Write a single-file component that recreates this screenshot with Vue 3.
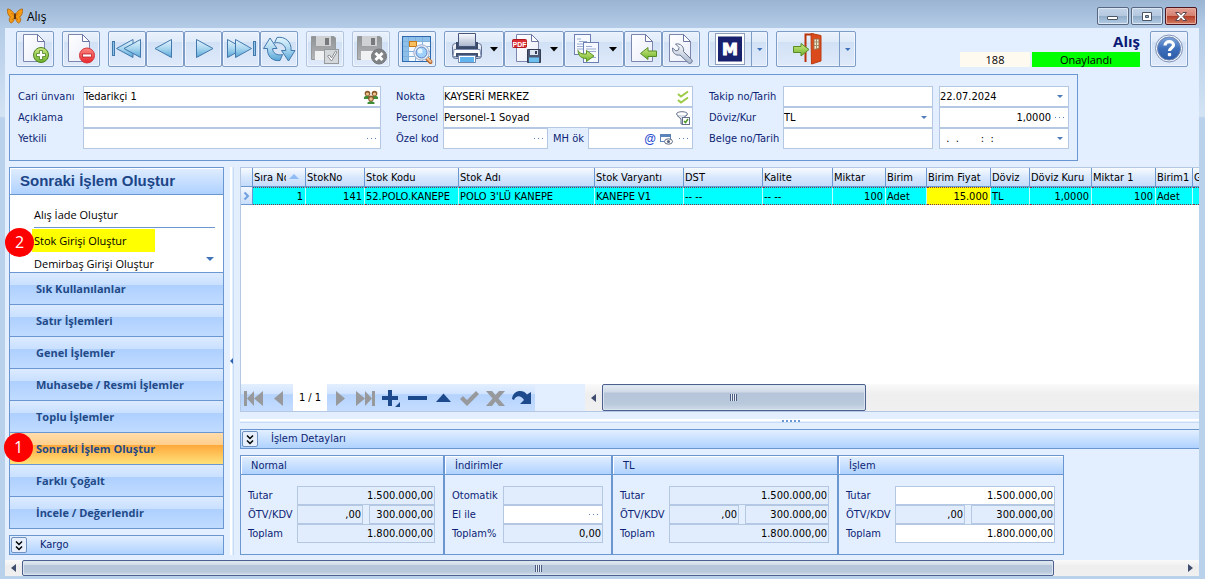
<script setup>
import { ref } from 'vue'

const menu = [
  { text: 'Sık Kullanılanlar' },
  { text: 'Satır İşlemleri' },
  { text: 'Genel İşlemler' },
  { text: 'Muhasebe / Resmi İşlemler' },
  { text: 'Toplu İşlemler' },
  { text: 'Sonraki İşlem Oluştur', active: true, step: '1' },
  { text: 'Farklı Çoğalt' },
  { text: 'İncele / Değerlendir' },
]

const columns = [
  { title: 'Sıra No', value: '1', width: 53, num: true, sorted: true },
  { title: 'StokNo', value: '141', width: 59, num: true },
  { title: 'Stok Kodu', value: '52.POLO.KANEPE', width: 94 },
  { title: 'Stok Adı', value: "POLO 3'LÜ KANEPE", width: 136 },
  { title: 'Stok Varyantı', value: 'KANEPE V1', width: 89 },
  { title: 'DST', value: '-- --', width: 79 },
  { title: 'Kalite', value: '-- --', width: 70 },
  { title: 'Miktar', value: '100', width: 53, num: true },
  { title: 'Birim', value: 'Adet', width: 41 },
  { title: 'Birim Fiyat', value: '15.000', width: 64, num: true, mark: true },
  { title: 'Döviz', value: 'TL', width: 39 },
  { title: 'Döviz Kuru', value: '1,0000', width: 62, num: true },
  { title: 'Miktar 1', value: '100', width: 64, num: true },
  { title: 'Birim1', value: 'Adet', width: 37 },
  { title: 'G', value: '', width: 0 },
]

const totals = ref([
  { title: 'Normal', cls: 'w-normal', rows: [['Tutar', '1.500.000,00'], ['ÖTV/KDV', ',00', '300.000,00'], ['Toplam', '1.800.000,00']] },
  { title: 'İndirimler', cls: 'w-disc', rows: [['Otomatik', ''], ['El ile', ''], ['Toplam%', '0,00']], open: [1], dots: 1 },
  { title: 'TL', cls: 'w-tl', rows: [['Tutar', '1.500.000,00'], ['ÖTV/KDV', ',00', '300.000,00'], ['Toplam', '1.800.000,00']] },
  { title: 'İşlem', cls: 'w-tl', rows: [['Tutar', '1.500.000,00'], ['ÖTV/KDV', ',00', '300.000,00'], ['Toplam', '1.800.000,00']], open: [0, 2] },
])
</script>

<template>
  <div class="window">
    <header class="titlebar">
      <svg class="app-icon" width="16" height="16" viewBox="0 0 16 16">
        <path d="M8 7 C6 3 2 .5 .5 1 C0 4 1 8 3.5 9 C1.500 10 2 14 4 15 C6 15 7 12 8 9Z" fill="#f39a14" stroke="#a85c08" stroke-width=".7" />
        <path d="M8 7 C10 3 14 .5 15.500 1 C16 4 15 8 12.500 9 C14.500 10 14 14 12 15 C10 15 9 12 8 9Z" fill="#f39a14" stroke="#a85c08" stroke-width=".7" />
        <path d="M4.500 5L8 8.500L11.500 5M5 12L8 8.500L11 12" fill="none" stroke="#b9660a" stroke-width=".8" />
        <path d="M8 5.500V11" stroke="#4a2a10" stroke-width="1.600" />
      </svg>
      <h1>Alış</h1>
      <div class="win-buttons">
        <button aria-label="Küçült"><svg width="30" height="16"><rect x="9.500" y="8.500" width="10" height="3" rx=".5" fill="#fff" stroke="#4a5666" /></svg></button>
        <button aria-label="Ekranı kapla"><svg width="30" height="16"><path d="M10.500 4.500h9v8h-9zM13.500 7.500h3v2h-3z" fill="#fff" fill-rule="evenodd" stroke="#4a5666" /></svg></button>
        <button class="close" aria-label="Kapat"><svg width="30" height="16"><path d="M9.500 4.500h3.500l2 2.300 2-2.300h3.500l-3.500 4 3.500 4h-3.500l-2-2.300-2 2.300h-3.500l3.500-4z" fill="#fff" stroke="#5a4850" /></svg></button>
      </div>
    </header>

    <main class="client">
      <svg width="0" height="0" class="defs">
        <defs>
          <linearGradient id="gBlue" x1="0" y1="0" x2="0" y2="1"><stop offset="0" stop-color="#e4f5fd" /><stop offset=".5" stop-color="#a9d6ef" /><stop offset="1" stop-color="#57a5d6" /></linearGradient>
          <linearGradient id="gGreen" x1="0" y1="0" x2="0" y2="1"><stop offset="0" stop-color="#d0eb84" /><stop offset="1" stop-color="#6bb02a" /></linearGradient>
          <linearGradient id="gRed" x1="0" y1="0" x2="0" y2="1"><stop offset="0" stop-color="#ff8a84" /><stop offset="1" stop-color="#e8242c" /></linearGradient>
          <linearGradient id="gPage" x1="0" y1="0" x2="1" y2="1"><stop offset="0" stop-color="#fff" /><stop offset="1" stop-color="#e9edfa" /></linearGradient>
          <linearGradient id="gGrey" x1="0" y1="0" x2="0" y2="1"><stop offset="0" stop-color="#fafcff" /><stop offset="1" stop-color="#a9b6cc" /></linearGradient>
          <linearGradient id="gDisk" x1="0" y1="0" x2="0" y2="1"><stop offset="0" stop-color="#8f9295" /><stop offset="1" stop-color="#b4b6b9" /></linearGradient>
          <linearGradient id="gHelp" x1="0" y1="0" x2="0" y2="1"><stop offset="0" stop-color="#7ea6dc" /><stop offset=".5" stop-color="#3d6fba" /><stop offset="1" stop-color="#2a5ba8" /></linearGradient>
          <path id="page" d="M7.500 3.500H21.500L28.500 10.500V30.500H7.500Z" fill="url(#gPage)" stroke="#7d87ae" />
          <path id="fold" d="M21.500 3.500V10.500H28.500Z" fill="#fff" stroke="#6b76a4" />
          <g id="floppy">
            <path d="M5.500 5.500H28L29.500 7V28.500H5.500Z" fill="url(#gDisk)" stroke="#96999c" />
            <rect x="10" y="5" width="15" height="10" fill="#cfd1d3" /><rect x="19" y="7" width="4" height="7" fill="#77797c" />
            <rect x="9" y="20" width="17" height="9" fill="#f0f1f2" />
          </g>
          <path id="drop" d="M46 16h8l-4 4.500z" fill="#000" />
          <path id="bigleft" d="M17 8.500V26.500L.5 17.500Z" fill="url(#gBlue)" stroke="#4378ad" />
        </defs>
      </svg>

      <div class="toolbar">
        <button class="tb" aria-label="Yeni"><svg width="38" height="36"><use href="#page" /><use href="#fold" /><circle cx="25" cy="24" r="7.500" fill="url(#gGreen)" stroke="#4b8222" /><path d="M23.500 19.500h3v3h3v3h-3v3h-3v-3h-3v-3h3z" fill="#fff" stroke="#4b8222" stroke-width=".8" /></svg></button>
        <button class="tb" aria-label="Sil"><svg width="38" height="36"><use href="#page" x="-1" /><use href="#fold" x="-1" /><circle cx="25" cy="24.500" r="7.500" fill="url(#gRed)" stroke="#d2353a" /><rect x="20.500" y="23" width="9" height="3" fill="#fff" stroke="#b82228" stroke-width=".8" /></svg></button>
        <div class="tb-group">
          <button class="tb" aria-label="İlk"><svg width="38" height="36"><rect x="4.500" y="10.500" width="2" height="14" fill="#8cc4e6" stroke="#4378ad" /><use href="#bigleft" x="8" /><use href="#bigleft" x="15.500" /></svg></button>
          <button class="tb" aria-label="Önceki"><svg width="38" height="36"><use href="#bigleft" x="8.500" /></svg></button>
          <button class="tb" aria-label="Sonraki"><svg width="38" height="36"><path d="M12.500 8.500V26.500L29 17.500Z" fill="url(#gBlue)" stroke="#4378ad" /></svg></button>
          <button class="tb" aria-label="Son"><svg width="38" height="36"><path d="M5.500 8.500V26.500L21.500 17.500Z" fill="url(#gBlue)" stroke="#4378ad" /><path d="M13.500 8.500V26.500L29.500 17.500Z" fill="url(#gBlue)" stroke="#4378ad" /><rect x="31.500" y="10.500" width="2" height="14" fill="#8cc4e6" stroke="#4378ad" /></svg></button>
          <button class="tb" aria-label="Yenile"><svg width="38" height="36">
            <path d="M10 7L3.500 17.500H7.500C7 25 12 30.500 20 29.500L22.500 23.500C17 25 12.500 22 12.700 17.500H17Z" fill="url(#gBlue)" stroke="#4378ad" stroke-linejoin="round" />
            <path d="M28.500 30L35 19.500H31C32 11 25 5 17 6.500L14.500 12C20 10.500 26 14 25.800 19.500H21.500Z" fill="url(#gBlue)" stroke="#4378ad" stroke-linejoin="round" />
          </svg></button>
        </div>
        <button class="tb off" disabled aria-label="Kaydet"><svg width="38" height="36"><use href="#floppy" /><rect x="18.500" y="18.500" width="14" height="14" fill="#d5d8db" stroke="#96999c" /><path d="M21.500 25l2 -1 2 3 4-7 1.500 1-5.500 9z" fill="#fff" stroke="#8b8e92" /></svg></button>
        <button class="tb off" disabled aria-label="Vazgeç"><svg width="38" height="36"><use href="#floppy" /><circle cx="27" cy="25.500" r="7.500" fill="#808386" stroke="#74777a" /><path d="M23.500 22l7 7M30.500 22l-7 7" stroke="#fff" stroke-width="3" /></svg></button>
        <button class="tb" aria-label="Tablo ara"><svg width="38" height="36">
          <rect x="4.500" y="5.500" width="28" height="25" fill="#f2f8ff" stroke="#2f69ad" />
          <path d="M5 6h27v4H5zM5 10h5v20H5z" fill="#8cc0ea" />
          <path d="M10.500 6V30M17.500 6V30M24.500 6V30M5 10.500H32M5 15.500H32M5 20.500H32M5 25.500H32" stroke="#7fb0dc" />
          <rect x="11.500" y="10.500" width="7" height="5" fill="#f8bf60" stroke="#c77a17" />
          <path d="M28 26.500l4.500 4.500" stroke="#b66a2c" stroke-width="4" stroke-linecap="round" /><path d="M29 27l3.500 3.500" stroke="#f5c08e" stroke-width="2" stroke-linecap="round" />
          <circle cx="23.500" cy="21.500" r="6.500" fill="#b9dcfb" stroke="#eef4fb" stroke-width="3" /><circle cx="23.500" cy="21.500" r="5.500" fill="#9fd0f9" stroke="#5d7fc0" /><circle cx="23.500" cy="21.500" r="7.700" fill="none" stroke="#8595b8" stroke-width=".8" /><circle cx="22" cy="20" r="2.500" fill="#e6f4ff" />
        </svg></button>
        <div class="tb-group">
          <button class="tb wide" aria-label="Yazdır"><svg width="60" height="36">
            <rect x="8.500" y="12.500" width="29" height="15" rx="3" fill="url(#gGrey)" stroke="#5f6f93" />
            <path d="M12 11h22v8H12z" fill="#3b4a68" /><path d="M14.500 2.500h17v13h-17z" fill="url(#gGrey)" stroke="#46557a" />
            <path d="M10 18.500h26l1 7H9z" fill="#fff" stroke="#8090b2" /><path d="M12 22h22v4H12z" fill="#41506e" />
            <path d="M14.500 24.500h17v7h-17z" fill="#fff" stroke="#7088b0" /><path d="M16 26h14v5H16z" fill="#62b4ee" /><use href="#drop" /></svg></button>
          <button class="tb wide" aria-label="PDF kaydet"><svg width="60" height="36">
            <path d="M12.500 3.500H27.500L34.500 10.500V30.500H12.500Z" fill="url(#gPage)" stroke="#7d87ae" /><path d="M27.500 3.500V10.500H34.500Z" fill="#fff" stroke="#6b76a4" />
            <rect x="8.500" y="8.500" width="14" height="8" rx="1" fill="#d92f35" stroke="#b0181f" /><text x="15.500" y="15.500" class="pdf" text-anchor="middle">PDF</text>
            <path d="M23.500 18.500h13v13h-13z" fill="#4d5874" stroke="#343d56" /><path d="M26 19h8v5h-8z" fill="#dce4f0" /><path d="M31 20h2v3h-2z" fill="#343d56" /><path d="M25 26.500h10v5H25z" fill="#6cc0f0" /><use href="#drop" /></svg></button>
          <button class="tb wide" aria-label="Kopyala"><svg width="60" height="36">
            <rect x="10.500" y="3.500" width="16" height="20" fill="#f6f9ff" stroke="#6d80b4" /><path d="M13 8h4M15 10.500h8M13 13h10M13 15.500h10M13 18h8" stroke="#9aabd0" />
            <rect x="19.500" y="11.500" width="15" height="20" fill="#f6f9ff" stroke="#6d80b4" /><path d="M22 15.500h6M22 18h10M22 20.500h10M25 26.500h7" stroke="#9aabd0" />
            <path d="M14 19.500C15 22 18 23.500 22.500 23V19.500L30 25L22.500 30.500V27.500C17 27.500 14.500 25 14 19.500Z" fill="url(#gGreen)" stroke="#5d9424" /><use href="#drop" x="-1" /></svg></button>
          <button class="tb" aria-label="İçe aktar"><svg width="38" height="36"><use href="#page" /><use href="#fold" /><path d="M16.500 22.500L24 16.500V20H32.500V25.500H24V28.500Z" fill="url(#gGreen)" stroke="#568c25" /></svg></button>
          <button class="tb" aria-label="Ayarlar"><svg width="38" height="36"><use href="#page" /><use href="#fold" />
            <path d="M13.500 13L17 16.500L16.500 19L14 20L10.500 17C10 21.500 13.500 25 18 24L26.500 32C29 33.500 31.500 30.500 29.500 28.500L21.500 20.500C22.500 16 18.500 12 13.500 13Z" fill="url(#gGrey)" stroke="#66748f" stroke-linejoin="round" /></svg></button>
        </div>
        <button class="tb wide" aria-label="M"><svg width="60" height="36">
          <rect x="7.500" y="2.500" width="29" height="31" fill="#fff" stroke="#8e9dbb" /><rect x="10" y="5.500" width="24" height="25" fill="#17216d" />
          <text x="22" y="23.500" class="m" text-anchor="middle">M</text>
          <path d="M43.500 1V35" stroke="#7d9cc6" /><path d="M49 17h5.500l-2.750 3z" fill="#3d71b5" /></svg></button>
        <button class="tb exit" aria-label="Çıkış"><svg width="80" height="36">
          <path d="M29.500 31V3.500H38" fill="none" stroke="#b9320a" stroke-width="2" /><path d="M35 2.500L45 4.500V30L35.500 33Z" fill="#da4a1a" stroke="#bb3c12" />
          <path d="M38 8h5v9.500l-5 1z" fill="#f2ead5" stroke="#a56b48" /><path d="M40.500 8v10M38 11h5M38 14.500h5" stroke="#9d8d69" />
          <path d="M17.500 15.500H25V12.500L33 18.500L25 25V21.500H17.500Z" fill="url(#gGreen)" stroke="#568c25" />
          <path d="M63.500 1V35" stroke="#7d9cc6" /><path d="M69 17h5.500l-2.750 3z" fill="#3d71b5" /></svg></button>

        <div class="status">
          <h2>Alış</h2>
          <div class="status-row"><output class="no">188</output><output class="ok">Onaylandı</output></div>
        </div>
        <button class="tb help" aria-label="Yardım"><svg width="38" height="36"><circle cx="19" cy="17.500" r="13.500" fill="#f3f6fb" stroke="#7f93b8" /><circle cx="19" cy="17.500" r="11.500" fill="url(#gHelp)" stroke="#6d86b4" /><path d="M15 14.500C15 9.500 23.500 9.500 23.500 14C23.500 17 19.500 17 19.500 20" fill="none" stroke="#fff" stroke-width="3.200" /><rect x="17.800" y="22" width="3.400" height="3.200" rx="1" fill="#fff" /></svg></button>
      </div>

      <form class="form-panel" @submit.prevent>
        <div class="pairs c1">
          <label for="cari">Cari ünvanı</label>
          <div class="field"><input id="cari" value="Tedarikçi 1" /><button aria-label="Cari seç"><svg width="14" height="14" viewBox="0 0 14 14">
            <path d="M0 7q3-3 6 0v2H0zM8 7q3-3 6 0v2H8zM3.500 12.500q3.500-3 7 0V14h-7z" fill="#3f8d36" /><circle cx="3.500" cy="3.500" r="2.800" fill="#8a5a2c" /><circle cx="10.500" cy="3.500" r="2.800" fill="#8a5a2c" /><circle cx="7" cy="8.500" r="2.900" fill="#8a5a2c" /><circle cx="3.500" cy="4" r="1.600" fill="#f1c592" /><circle cx="10.500" cy="4" r="1.600" fill="#f1c592" /><circle cx="7" cy="9" r="1.700" fill="#f1c592" /></svg></button></div>
          <label for="acik">Açıklama</label>
          <div class="field"><input id="acik" /></div>
          <label for="yetkili">Yetkili</label>
          <div class="field"><input id="yetkili" /><button class="dots" aria-label="Yetkili seç"><i></i></button></div>
        </div>
        <div class="pairs c2">
          <label for="nokta">Nokta</label>
          <div class="field"><input id="nokta" value="KAYSERİ MERKEZ" /><button aria-label="Nokta seç"><svg width="14" height="14" viewBox="0 0 14 14"><path d="M2 4l3 2.500L12 1.500M2 10l3 2.500L12 7.500" fill="none" stroke="#9bcb45" stroke-width="2" /></svg></button></div>
          <label for="personel">Personel</label>
          <div class="field"><input id="personel" value="Personel-1 Soyad" /><button aria-label="Personel seç"><svg width="14" height="14" viewBox="0 0 14 14"><ellipse cx="6" cy="3" rx="5.500" ry="2.300" fill="#fff" stroke="#65728c" /><path d="M1 4.500L5 8V13H7V7L11 4" fill="#d8deea" stroke="#65728c" /><rect x="6.500" y="6.500" width="7" height="7" fill="#fff" stroke="#65728c" /><path d="M8 10l1.500 1.500L12 8" fill="none" stroke="#4f9a22" stroke-width="1.500" /></svg></button></div>
          <label for="ozel">Özel kod</label>
          <div class="split">
            <div class="field"><input id="ozel" /><button class="dots" aria-label="Özel kod seç"><i></i></button></div>
            <label for="mh">MH ök</label>
            <div class="field mh"><input id="mh" /><button class="at" aria-label="E-posta">@</button><button aria-label="Görüntüle"><svg width="13" height="12" viewBox="0 0 13 12"><rect x=".5" y="1.500" width="10" height="7" fill="#fff" stroke="#5a84ba" /><path d="M0 1h11v3H0z" fill="#5a84ba" /><ellipse cx="8.500" cy="8.500" rx="4" ry="2.700" fill="#fff" stroke="#5c6880" /><circle cx="8.500" cy="8.500" r="1.600" fill="#5c6880" /></svg></button><button class="dots" aria-label="MH ök seç"><i></i></button></div>
          </div>
        </div>
        <div class="pairs c3">
          <label for="takip">Takip no/Tarih</label>
          <div class="field"><input id="takip" /></div>
          <div class="field"><input aria-label="Tarih" value="22.07.2024" /><button class="caret" aria-label="Tarih aç"></button></div>
          <label for="doviz">Döviz/Kur</label>
          <div class="field sel"><select id="doviz"><option>TL</option></select><span class="caret"></span></div>
          <div class="field"><input class="num" aria-label="Kur" value="1,0000" /><button class="dots" aria-label="Kur seç"><i></i></button></div>
          <label for="belge">Belge no/Tarih</label>
          <div class="field"><input id="belge" /></div>
          <div class="field"><input aria-label="Belge tarihi" value="  .  .       :  :" /><button class="caret" aria-label="Belge tarihi aç"></button></div>
        </div>
      </form>

      <div class="work">
        <aside class="side">
          <nav class="accordion">
            <h2 class="acc-title">Sonraki İşlem Oluştur</h2>
            <div class="acc-body">
              <a href="#" class="first">Alış İade Oluştur</a>
              <a href="#" class="marked"><span class="step">2</span>Stok Girişi Oluştur</a>
              <a href="#" class="last">Demirbaş Girişi Oluştur</a>
              <span class="more"></span>
            </div>
            <button v-for="m in menu" :key="m.text" class="acc-btn" :class="{ active: m.active }">
              <span v-if="m.step" class="step">{{ m.step }}</span>{{ m.text }}
            </button>
          </nav>
          <div class="bar">
            <button class="expand" aria-label="Kargo aç"><svg width="14" height="15"><path d="M4 3.500l3 3 3-3M4 8.500l3 3 3-3" fill="none" stroke="#000" stroke-width="1.500" /></svg></button>
            <span>Kargo</span>
          </div>
        </aside>

        <div class="vsplit"><i></i></div>

        <section class="main">
          <div class="grid">
            <div class="rows">
              <table>
                <colgroup><col class="ind" /><col v-for="c in columns" :key="c.title" :style="c.width ? { width: c.width + 'px' } : {}" /></colgroup>
                <thead><tr><th></th><th v-for="c in columns" :key="c.title" :class="{ sorted: c.sorted }"><div>{{ c.title }}</div></th></tr></thead>
                <tbody><tr>
                  <td class="ind"><svg width="8" height="10"><path d="M1.500 1.500L5 5L1.500 8.500" fill="none" stroke="#6fa0e0" stroke-width="2" /></svg></td>
                  <td v-for="c in columns" :key="c.title" :class="{ num: c.num, mark: c.mark }">{{ c.value }}</td>
                </tr></tbody>
              </table>
            </div>
            <div class="grid-foot">
              <div class="navigator">
                <button disabled aria-label="İlk kayıt"><svg width="26" height="26"><path d="M3 6h3v15H3zM13 6v15l-7-7.500zM22 6v15l-9-7.500z" fill="#98999c" /></svg></button>
                <button disabled aria-label="Önceki kayıt"><svg width="26" height="26"><path d="M16 6v15l-9-7.500z" fill="#98999c" /></svg></button>
                <output>1 / 1</output>
                <button disabled aria-label="Sonraki kayıt"><svg width="26" height="26"><path d="M9 6v15l9-7.500z" fill="#98999c" /></svg></button>
                <button disabled aria-label="Son kayıt"><svg width="26" height="26"><path d="M3 6v15l9-7.500zM12 6v15l7-7.500zM19 6h3v15h-3z" fill="#98999c" /></svg></button>
                <button aria-label="Ekle"><svg width="26" height="26"><path d="M9 5h4v6h6v4h-6v6H9v-6H3v-4h6zM21 17v5h-5z" fill="#1d4a8d" /></svg></button>
                <button aria-label="Çıkar"><svg width="26" height="26"><path d="M3 11h19v4H3z" fill="#1d4a8d" /></svg></button>
                <button aria-label="Düzenle"><svg width="26" height="26"><path d="M5 17h15l-7.500-8.500z" fill="#1d4a8d" /></svg></button>
                <button disabled aria-label="Onayla"><svg width="26" height="26"><path d="M3 14l3-3 4 4 9-9 3 3-12 12z" fill="#98999c" /></svg></button>
                <button disabled aria-label="İptal"><svg width="26" height="26"><path d="M3 6h6l3.500 4L16 6h6l-6.500 7.500L22 21h-6l-3.500-4.500L9 21H3l6.500-7.500z" fill="#98999c" /></svg></button>
                <button aria-label="Tazele"><svg width="26" height="26"><path d="M3 14C4 5 14 4 18 9.500L22 7v12H11l4-4C12 10 7 10 5 15z" fill="#1d4a8d" /></svg></button>
              </div>
              <div class="hscroll gscroll"><button class="arrow" aria-label="Sola"></button><div class="track"><div class="thumb"><i></i></div></div></div>
            </div>
          </div>

          <div class="hsplit"><i></i></div>

          <div class="bar wide-bar">
            <button class="expand" aria-label="Detay aç"><svg width="14" height="15"><path d="M4 3.500l3 3 3-3M4 8.500l3 3 3-3" fill="none" stroke="#000" stroke-width="1.500" /></svg></button>
            <span>İşlem Detayları</span>
          </div>

          <div class="totals">
            <fieldset v-for="(t, ti) in totals" :key="t.title" :class="t.cls">
              <h3>{{ t.title }}</h3>
              <div class="t-body">
                <div v-for="(r, ri) in t.rows" :key="r[0]" class="t-row">
                  <label :for="'t' + ti + ri">{{ r[0] }}</label>
                  <div class="t-fields">
                    <div v-for="n in r.length - 1" :key="n" class="field" :class="{ ro: !(t.open || []).includes(ri), small: r.length > 2 && n === 1 }">
                      <input :id="n === 1 ? 't' + ti + ri : undefined" class="num" :aria-label="t.title + ' ' + r[0]" :value="r[n]" />
                      <button v-if="t.dots === ri" class="dots" aria-label="Seç"><i></i></button>
                    </div>
                  </div>
                </div>
              </div>
            </fieldset>
          </div>
        </section>
      </div>

      <div class="hscroll wscroll"><button class="arrow" aria-label="Sola kaydır"></button><div class="track"><div class="thumb"><i></i></div></div><button class="arrow right" aria-label="Sağa kaydır"></button></div>
    </main>
  </div>
</template>

<style>
body { margin: 0; }
</style>

<style scoped>
* { box-sizing: border-box; }
button, input, select { font: inherit; color: inherit; margin: 0; padding: 0; border: 0; background: none; border-radius: 0; }
.window {
  min-height: 100vh; display: flex; flex-direction: column; padding: 0 6px 3px 5px; overflow: hidden;
  font: 11px/14px "DejaVu Sans Condensed", "Noto Sans", sans-serif; color: #000;
  background: linear-gradient(#9ab4d2, #b4cce7 28px, #d3e3f4 116px, #b9d1ea 118px, #b9d1ea);
}
.titlebar { height: 28px; display: flex; align-items: flex-start; padding-left: 2px; }
.app-icon { margin-top: 8px; }
h1 { margin: 8px 0 0 4px; font: 12px/18px "Open Sans", "Noto Sans", sans-serif; }
.win-buttons { display: flex; gap: 2px; margin: 7px 2px 0 auto; }
.win-buttons button { width: 32px; height: 18px; border: 1px solid #56677f; border-radius: 2px; background: linear-gradient(#c3d4e8, #b4c8df 48%, #93aeca 52%, #b3cbe4); box-shadow: inset 0 0 0 1px #dbe7f4; }
.win-buttons .close { border-color: #4d1620; background: linear-gradient(#e3a195, #d5806f 48%, #b53d28 52%, #d37c60); box-shadow: inset 0 0 0 1px #e6ada1; }
.win-buttons svg { display: block; }

.client { flex: 1; display: flex; flex-direction: column; background: #e3efff; }
.defs { position: absolute; }
.toolbar { display: flex; gap: 8px; padding: 3px 11px 7px 11px; }
.tb-group { display: flex; }
.tb { width: 38px; height: 36px; flex: none; border: 1px solid #7d9cc6; border-radius: 2px; background: linear-gradient(#e9f1fc, #e0ebf9 28%, #d1e1f5 30%, #dfeafa); box-shadow: inset 0 0 0 1px #eef5fe; }
.tb.wide { width: 60px; }
.tb.exit { width: 80px; }
.tb.off { border-color: #b3c5dd; }
.tb svg { display: block; margin: -1px; }
.pdf { font: bold 7px "Liberation Sans", sans-serif; fill: #fff; }
.m { font: bold 16px "DejaVu Sans", sans-serif; fill: #fff; stroke: #fff; stroke-width: 1px; }
.status { margin-left: auto; margin-right: 2px; text-align: right; }
.status h2 { margin: 0; color: #0a1a75; font: bold 15px/21px "Open Sans", sans-serif; }
.status-row { display: flex; gap: 2px; font: 11px/15px "Open Sans", sans-serif; text-align: center; }
.no { width: 70px; background: #fffaf0; }
.ok { width: 108px; background: #0f0; }

.form-panel { display: flex; margin: 0 121px 6px 4px; padding: 11px 8px 11px 8px; border: 1px solid #6a96d2; color: #0d2474; }
.pairs { display: grid; grid-auto-rows: 21px; align-items: center; min-width: 0; }
.c1 { grid-template-columns: 65px 1fr; flex: 363 1 0; }
.c2 { grid-template-columns: 47px 1fr; flex: 297 1 0; margin-left: 15px; }
.c3 { grid-template-columns: 74px 1fr 136px; flex: 360 1 0; margin-left: 16px; }
.c3 > .field:nth-child(3n) { margin-left: 6px; }
label { white-space: nowrap; }
.field { height: 21px; min-width: 0; display: flex; align-items: center; border: 1px solid #b4c8e4; background: #fff; color: #000; }
.field input { flex: 1; width: 100%; min-width: 0; height: 100%; outline: 0; white-space: pre; }
.field button { flex: none; display: flex; padding: 0 2px; }
.num { text-align: right; }
.field .dots { width: 17px; justify-content: center; }
.dots i { width: 9px; height: 1px; background: repeating-linear-gradient(90deg, #5b83bb 0 1px, transparent 1px 4px); }
.caret { width: 17px; height: 18px; justify-content: center; align-items: center; }
.caret::after { content: ""; border: 3px solid transparent; border-top: 3px solid #4d7cb8; border-bottom: 0; }
.sel { position: relative; }
.sel select { appearance: none; flex: 1; height: 100%; outline: 0; }
.sel .caret { position: absolute; right: 0; display: flex; pointer-events: none; }
.split { display: flex; align-items: center; }
.split .field { flex: 1; }
.split label { width: 40px; padding-left: 5px; flex: none; }
.field .at { color: #2b4fd0; font: bold 12px/14px "Liberation Sans", sans-serif; }

.work { flex: 1; display: flex; margin-left: 4px; }
.side { width: 215px; flex: none; display: flex; flex-direction: column; gap: 6px; }
.accordion { flex: 1; display: flex; flex-direction: column; border: 1px solid #6a96d2; background: #fff; }
.acc-title { margin: 0; height: 27px; padding-left: 10px; border-bottom: 1px solid #6a96d2; color: #1c4587; background: linear-gradient(#e0edff, #afd1ff); box-shadow: inset 1px 1px #fff; font: bold 15px/26px "Liberation Sans", Arial, sans-serif; }
.acc-body { flex: 1; position: relative; display: flex; flex-direction: column; min-height: 77px; padding-top: 6px; font: 12px/22px "Open Sans", "Noto Sans", sans-serif; }
.acc-body a { position: relative; color: #000; text-decoration: none; font-size: 11px; }
.acc-body .first { height: 27px; line-height: 28px; margin: 0 8px 1px 24px; border-bottom: 1px solid #6a96d2; }
.acc-body .marked { width: 123px; height: 23px; line-height: 24px; margin-left: 22px; padding-left: 2px; background: #ff0; }
.acc-body .last { height: 20px; line-height: 24px; margin-left: 24px; }
.more { position: absolute; right: 9px; bottom: 11px; border: 4px solid transparent; border-top-color: #3f74b8; border-bottom: 0; }
.acc-btn { position: relative; height: 32px; padding-left: 26px; border-top: 1px solid #6a96d2; text-align: left; color: #1f4a87; background: linear-gradient(#dcebff, #c9e0ff 38%, #aed0ff 40%, #c0dbff); font: bold 11px/30px "Open Sans", "Noto Sans", sans-serif; white-space: nowrap; }
.acc-btn.active { background: linear-gradient(#ffdcab, #ffcf8b 38%, #ffa93c 40%, #ffe17a); }
.acc-body .step, .acc-btn .step { position: absolute; left: -27px; top: -1px; z-index: 1; width: 29px; height: 29px; border-radius: 50%; background: #f00; color: #fff; text-align: center; font: 16px/28px "Open Sans", sans-serif; }
.acc-btn .step { left: -6px; top: 0; }
.bar { height: 20px; flex: none; display: flex; align-items: center; gap: 13px; padding-left: 1px; border: 1px solid #6a96d2; background: linear-gradient(#e3efff, #afd2ff); color: #0d2474; }
.expand { width: 16px; height: 16px; border: 1px solid #6e91c0; border-radius: 2px; background: #e6effb; display: flex; align-items: center; justify-content: center; }
.wide-bar { border-right: 0; }

.vsplit { width: 16px; flex: none; display: flex; align-items: center; background: linear-gradient(90deg, transparent 6px, #fff 6px 8px, #e3efff 8px 9px, #c5dbf8 9px 10px, transparent 10px); }
.vsplit i { margin-left: 6px; border: 3px solid transparent; border-right-color: #2d62b0; border-left: 0; }
.main { flex: 1; min-width: 0; display: flex; flex-direction: column; }
.grid { flex: 1; display: flex; flex-direction: column; border: 1px solid #b4c8e4; border-right: 0; background: #fff; }
.rows { flex: 1; overflow: hidden; }
table { width: 100%; table-layout: fixed; border-collapse: separate; border-spacing: 0; line-height: 14px; }
col.ind { width: 12px; }
th { height: 19px; padding: 1px 0 0 1px; text-align: left; font-weight: normal; border-right: 1px solid #6a96d2; border-bottom: 1px solid #6a96d2; background: linear-gradient(#f8fbff, #d9e8fd 50%, #c3dbfb); white-space: nowrap; overflow: hidden; }
th:last-child, td:last-child { border-right: 0; }
th div { overflow: hidden; }
th.sorted { position: relative; }
th.sorted div { width: 32px; }
th.sorted::after { content: ""; position: absolute; right: 6px; top: 6px; border: 5px solid transparent; border-bottom-color: #8fbcf5; border-top: 0; }
td { height: 18px; padding: 2px 2px 0 1px; background: #0ff; border-right: 1px solid #bff; border-top: 1px dotted #803040; border-bottom: 1px dotted #803040; white-space: nowrap; overflow: hidden; }
td.num { text-align: right; }
td.mark { background: #ff0; }
td.ind { padding: 0 0 0 2px; border: 0; border-right: 1px solid #6a96d2; border-bottom: 1px solid #6a96d2; background: linear-gradient(#f4f8ff, #c9defb); }
td.ind svg { display: block; }
.grid-foot { height: 27px; display: flex; background: #e3efff; }
.navigator { display: flex; background: linear-gradient(#e3efff, #d2e4ff 35%, #b5d3fd 40%, #c5dcff); }
.navigator button { width: 26px; height: 27px; }
.navigator svg { display: block; }
.navigator output { width: 34px; line-height: 28px; text-align: center; background: #fff; }

.hscroll { display: flex; background: linear-gradient(#fafafa, #eee 40%, #f0f0f0); }
.track { flex: 1; }
.arrow { width: 17px; flex: none; display: flex; align-items: center; justify-content: center; }
.arrow::after { content: ""; border: 4px solid transparent; border-right: 5px solid #3e4d70; border-left: 0; }
.arrow.right::after { border: 4px solid transparent; border-left: 5px solid #3e4d70; border-right: 0; }
.thumb { height: 100%; display: flex; align-items: center; justify-content: center; border: 1px solid #4d6190; border-radius: 2px; background: linear-gradient(#e4ebf3, #cfdae6 28%, #b6c5d9 32%, #b9c9dc 75%, #cfdbe9); box-shadow: inset 0 0 0 1px #dbe5f0; }
.thumb i { width: 7px; height: 7px; background: repeating-linear-gradient(90deg, #4b5b80 0 1px, #e6edf5 1px 2px); }
.gscroll { flex: 1; margin-left: 50px; }
.gscroll .thumb { width: 44.2%; }
.wscroll { height: 16px; margin-top: 5px; }
.wscroll .thumb { width: 89%; }

.hsplit { height: 17px; flex: none; display: flex; justify-content: center; background: linear-gradient(transparent 7px, #fff 7px 9px, #e3efff 9px 10px, #c5dbf8 10px 11px, transparent 11px); }
.hsplit i { width: 18px; height: 2px; margin: 8px 0 0 143px; background: repeating-linear-gradient(90deg, #6a96d2 0 2px, #fff 2px 4px); }
.totals { display: flex; margin-top: 6px; color: #0d2474; }
fieldset { margin: 0; padding: 0; height: 100px; min-width: 0; border: 1px solid #6a96d2; }
.w-normal { flex: 0 1 204px; }
.w-disc { flex: 0 1 168px; }
.w-tl { flex: 0 1 226px; }
h3 { margin: 0; height: 19px; padding-left: 10px; border-bottom: 1px solid #6a96d2; background: linear-gradient(#e3efff, #afd2ff); box-shadow: inset 1px 1px #fff; font: inherit; line-height: 19px; }
.t-body { padding: 11px 8px 0 7px; }
.t-row { display: flex; align-items: center; height: 19px; }
.t-row label { width: 49px; flex: none; }
.w-disc .t-row label { width: 51px; }
.t-fields { flex: 1; min-width: 0; display: flex; gap: 6px; }
.t-fields .field { flex: 1; height: 19px; }
.w-tl .t-fields .small { flex: 0 0 70px; }
.t-fields input { padding-right: 1px; }
.ro { background: #e1edfc; }
</style>
